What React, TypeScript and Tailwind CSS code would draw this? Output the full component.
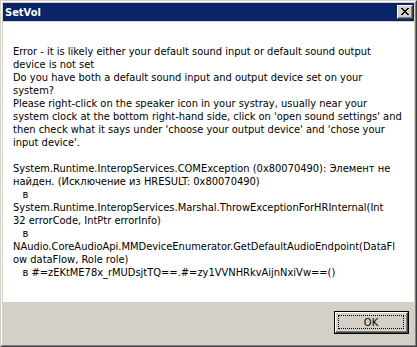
import React from 'react';

const MESSAGE_LINES = [
    "Error - it is likely either your default sound input or default sound output",
    "device is not set",
    "Do you have both a default sound input and output device set on your",
    "system?",
    "Please right-click on the speaker icon in your systray, usually near your",
    "system clock at the bottom right-hand side, click on 'open sound settings' and",
    "then check what it says under 'choose your output device' and 'chose your",
    "input device'.",
    "",
    "System.Runtime.InteropServices.COMException (0x80070490): Элемент не",
    "найден. (Исключение из HRESULT: 0x80070490)",
    "   в",
    "System.Runtime.InteropServices.Marshal.ThrowExceptionForHRInternal(Int",
    "32 errorCode, IntPtr errorInfo)",
    "   в",
    "NAudio.CoreAudioApi.MMDeviceEnumerator.GetDefaultAudioEndpoint(DataFl",
    "ow dataFlow, Role role)",
    "   в #=zEKtME78x_rMUDsjtTQ==.#=zy1VVNHRkvAijnNxiVw==()",
];

function CloseButton() {
    return (
        <div className="w-[16px] h-[14px] border-t border-l border-t-white border-l-white border-r border-b border-r-[#404040] border-b-[#404040] bg-[#d4d0c8]">
            <div className="w-full h-full border-r border-b border-r-[#808080] border-b-[#808080] flex items-center justify-center">
                <svg width="8" height="7" viewBox="0 0 8 7" shapeRendering="crispEdges">
                    <path d="M0 0h2v1h-2zM6 0h2v1h-2zM1 1h2v1h-2zM5 1h2v1h-2zM2 2h4v1h-4zM3 3h2v1h-2zM2 4h4v1h-4zM1 5h2v1h-2zM5 5h2v1h-2zM0 6h2v1h-2zM6 6h2v1h-2z" fill="#000" />
                </svg>
            </div>
        </div>
    );
}

function OkButton() {
    return (
        <div className="w-[75px] h-[23px] border border-black">
            <div className="w-full h-full border-t border-l border-t-white border-l-white border-r border-b border-r-[#404040] border-b-[#404040] bg-[#d4d0c8]">
                <div className="w-full h-full border-r border-b border-r-[#808080] border-b-[#808080] p-[2px]">
                    <div className="w-full h-full border border-dotted border-black flex items-center justify-center text-[11px] leading-none text-black">
                        OK
                    </div>
                </div>
            </div>
        </div>
    );
}

export default function App() {
    return (
        <div className="w-[417px] h-[347px] border-t border-l border-t-[#d4d0c8] border-l-[#d4d0c8] border-r border-b border-r-[#404040] border-b-[#404040] font-['DejaVu_Sans_Condensed','Liberation_Sans',sans-serif]">
            <div className="w-full h-full border-t border-l border-t-white border-l-white border-r border-b border-r-[#808080] border-b-[#808080] bg-[#d4d0c8] p-[1px] flex flex-col">
                {/* title bar */}
                <div className="h-[18px] bg-[#0a246a] flex items-center justify-between pl-[2px] pr-[1px]">
                    <span className="text-white font-bold text-[11px] leading-none">SetVol</span>
                    <CloseButton />
                </div>
                <div className="h-[1px]" />

                {/* message */}
                <div className="h-[280px] bg-white pt-[23px] pl-[10px] text-[11px] leading-[13px] text-black">
                    {MESSAGE_LINES.map((line, i) => (
                        <div key={i} className="h-[13px] whitespace-pre">{line}</div>
                    ))}
                </div>

                {/* buttons */}
                <div className="flex-1 flex justify-end items-start pt-[9px] pr-[5px]">
                    <OkButton />
                </div>
            </div>
        </div>
    );
}
